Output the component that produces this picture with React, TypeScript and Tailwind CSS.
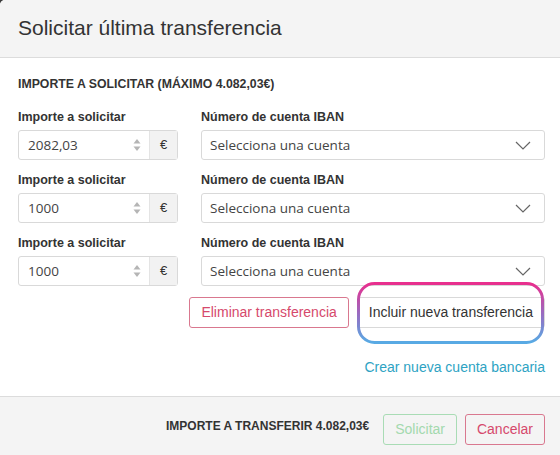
const sans = "font-['Liberation_Sans',Arial,sans-serif]";
const open = "font-['Open_Sans','Noto_Sans',sans-serif]";

function Spinner() {
  return (
    <svg width="8" height="16" viewBox="0 0 8 16" className="shrink-0">
      <path d="M4 2 L7.5 6.5 H0.5 Z" fill="#b5b5b5" />
      <path d="M4 14 L7.5 9.5 H0.5 Z" fill="#b5b5b5" />
    </svg>
  );
}

function Chevron() {
  return (
    <svg width="16" height="9" viewBox="0 0 16 9" className="shrink-0">
      <path d="M1 1 L8 8 L15 1" fill="none" stroke="#666" strokeWidth="1.2" />
    </svg>
  );
}

function Row({ amount }: { amount: string }) {
  return (
    <div className="flex flex-row gap-[23px]">
      <div className="flex w-[160px] flex-col gap-[5px]">
        <p className={`${sans} text-[12.5px] font-bold leading-4 text-[#333]`}>
          Importe a solicitar
        </p>
        <div className="flex h-[30px] flex-row rounded-[3px] border border-[#d9d9d9]">
          <div className="flex flex-1 flex-row items-center justify-between pl-[9px] pr-[8px]">
            <span className={`${open} text-[13.5px] text-[#444]`}>{amount}</span>
            <Spinner />
          </div>
          <div className="flex w-[28px] items-center justify-center border-l border-[#e4e4e4] bg-[#f2f2f2] text-[13px] text-[#333]">
            €
          </div>
        </div>
      </div>
      <div className="flex flex-1 flex-col gap-[5px]">
        <p className={`${sans} text-[12.5px] font-bold leading-4 text-[#333]`}>
          Número de cuenta IBAN
        </p>
        <div className="flex h-[30px] flex-row items-center justify-between rounded-[3px] border border-[#d9d9d9] pl-[8px] pr-[13px]">
          <span className={`${open} text-[13.5px] text-[#444]`}>
            Selecciona una cuenta
          </span>
          <Chevron />
        </div>
      </div>
    </div>
  );
}

export default function App() {
  return (
    <div className="h-[455px] w-[560px] bg-[#3a3a3a]">
      <div className={`${sans} flex h-full flex-col overflow-hidden rounded-tl-[5px] bg-white`}>
        <div className="flex h-[58px] items-center border-b border-[#dcdcdc] bg-[#f4f4f4] pl-[18px] pb-[2px]">
          <h1 className="text-[21px] text-[#333]">Solicitar última transferencia</h1>
        </div>

        <div className="flex flex-1 flex-col pl-[18px] pr-[15px] pt-[18px]">
          <p className="mb-[17px] text-[12.3px] font-bold leading-4 text-[#333]">
            IMPORTE A SOLICITAR (MÁXIMO 4.082,03€)
          </p>
          <div className="flex flex-col gap-[12px]">
            <Row amount="2082,03" />
            <Row amount="1000" />
            <Row amount="1000" />
          </div>

          <div className="mt-[11px] flex flex-row justify-end gap-[8px]">
            <button className="h-[31px] rounded-[3px] border border-[#d9788f] px-[11px] text-[14px] text-[#d6496c]">
              Eliminar transferencia
            </button>
            <div className="relative">
              <button className="h-[31px] rounded-[3px] border border-[#d9d9d9] px-[11px] text-[14px] text-[#333]">
                Incluir nueva transferencia
              </button>
              <svg
                className="pointer-events-none absolute left-[0px] top-[-15px]"
                width="187"
                height="62"
                viewBox="0 0 187 62"
              >
                <defs>
                  <linearGradient id="ann" x1="0" y1="0" x2="0" y2="1">
                    <stop offset="0" stopColor="#e82f8e" />
                    <stop offset="0.5" stopColor="#9a6ac0" />
                    <stop offset="1" stopColor="#58aae4" />
                  </linearGradient>
                </defs>
                <rect x="1.5" y="1.5" width="184" height="59" rx="16" fill="none" stroke="url(#ann)" strokeWidth="3" />
              </svg>
            </div>
          </div>

          <div className="mt-[29px] flex justify-end">
            <span className="text-[14px] leading-5 text-[#2ea3c3]">Crear nueva cuenta bancaria</span>
          </div>
        </div>

        <div className="flex h-[59px] flex-row items-start justify-end gap-[8px] border-t border-[#dcdcdc] bg-[#f4f4f4] pr-[15px] pt-[17px]">
          <span className="mr-[6px] mt-[4px] text-[12px] font-bold leading-4 text-[#333]">
            IMPORTE A TRANSFERIR 4.082,03€
          </span>
          <button className="h-[31px] rounded-[3px] border border-[#a9dcb5] px-[11px] text-[14px] text-[#a3d9ae]">
            Solicitar
          </button>
          <button className="h-[31px] rounded-[3px] border border-[#d9788f] px-[11px] text-[14px] text-[#d6496c]">
            Cancelar
          </button>
        </div>
      </div>
    </div>
  );
}
